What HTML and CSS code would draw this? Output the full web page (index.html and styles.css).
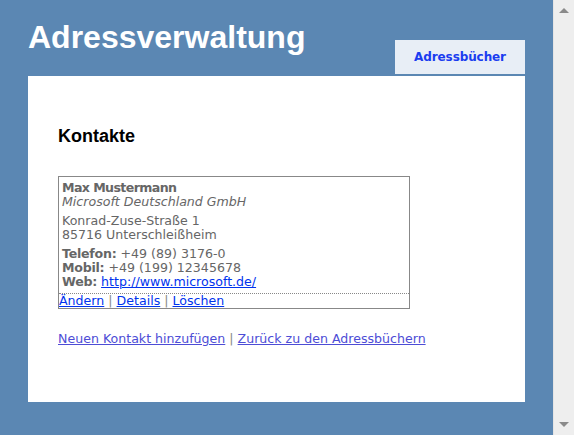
FILE: index.html
```html
<!DOCTYPE html>
<html lang="de">
<head>
<meta charset="utf-8">
<title>Adressverwaltung</title>
<link rel="stylesheet" href="styles.css">
</head>
<body>
<div class="window">
  <div class="page">
    <header class="header">
      <h1 class="title">Adressverwaltung</h1>
      <nav class="tab"><a href="#" class="tab-link">Adressbücher</a></nav>
    </header>
    <main class="panel">
      <h2 class="heading">Kontakte</h2>
      <div class="card">
        <div class="card-body">
          <div class="block">
            <div class="name">Max Mustermann</div>
            <div class="company">Microsoft Deutschland GmbH</div>
          </div>
          <div class="block">
            <div>Konrad-Zuse-Straße 1</div>
            <div>85716 Unterschleißheim</div>
          </div>
          <div class="block">
            <div><span class="label">Telefon:</span> +49 (89) 3176-0</div>
            <div><span class="label">Mobil:</span> +49 (199) 12345678</div>
            <div><span class="label">Web:</span> <a href="#" class="link">http://www.microsoft.de/</a></div>
          </div>
        </div>
        <div class="card-actions">
          <a href="#" class="link">Ändern</a> <span class="sep">|</span> <a href="#" class="link">Details</a> <span class="sep">|</span> <a href="#" class="link">Löschen</a>
        </div>
      </div>
      <div class="footer-links">
        <a href="#" class="visited">Neuen Kontakt hinzufügen</a> <span class="sep">|</span> <a href="#" class="visited">Zurück zu den Adressbüchern</a>
      </div>
    </main>
  </div>
  <div class="scrollbar">
    <span class="arrow arrow-up"></span>
    <span class="arrow arrow-down"></span>
  </div>
</div>
</body>
</html>
```

FILE: styles.css
```css
html, body {
  margin: 0;
  padding: 0;
  height: 100%;
}

body {
  background: #5b87b3;
  font-family: "DejaVu Sans", Verdana, sans-serif;
  font-size: 12.6px;
  color: #666;
  overflow: hidden;
}

.window {
  display: flex;
  height: 435px;
}

.page {
  flex: 1;
  padding: 0 28px;
}

.header {
  display: flex;
  justify-content: space-between;
  align-items: flex-start;
  height: 74px;
  margin-bottom: 2px;
}

.title {
  margin: 0;
  padding-top: 19px;
  font-family: "Liberation Sans", Arial, sans-serif;
  font-size: 32px;
  font-weight: bold;
  line-height: 37px;
  color: #fff;
}

.tab {
  align-self: flex-end;
  width: 130px;
  height: 34px;
  background: #e8eef6;
  display: flex;
  align-items: center;
  justify-content: center;
}

.tab-link {
  font-family: "DejaVu Sans", Tahoma, sans-serif;
  font-size: 12px;
  font-weight: bold;
  color: #1a3cf0;
  text-decoration: none;
  letter-spacing: -0.1px;
}

.panel {
  background: #fff;
  height: 326px;
  box-sizing: border-box;
  padding: 50px 30px 0;
}

.heading {
  margin: 0 0 30px;
  font-family: "Liberation Sans", Arial, sans-serif;
  font-size: 18px;
  font-weight: bold;
  line-height: 20px;
  color: #000;
}

.card {
  width: 350px;
  border: 1px solid #888;
}

.card-body {
  padding: 4px 3px 4px;
  line-height: 14px;
}

.block + .block {
  margin-top: 5px;
}

.name {
  font-weight: bold;
  letter-spacing: -0.6px;
}

.label {
  font-weight: bold;
  letter-spacing: -0.25px;
}

.company {
  font-style: italic;
}

.link {
  color: #0033ee;
}

.card-actions {
  border-top: 1px dotted #888;
  line-height: 14px;
}

.sep {
  color: #888;
}

.footer-links {
  margin-top: 23px;
  line-height: 14px;
}

.visited {
  color: #4d4dd6;
}

.scrollbar {
  flex: none;
  width: 21px;
  background: #eeeeee;
  border-left: 1px solid #e4e4e4;
  display: flex;
  flex-direction: column;
  justify-content: space-between;
  align-items: center;
  padding: 8px 0;
  box-sizing: border-box;
}

.arrow {
  width: 0;
  height: 0;
  border-left: 5px solid transparent;
  border-right: 5px solid transparent;
}

.arrow-up {
  border-bottom: 5px solid #8a8a8a;
}

.arrow-down {
  border-top: 5px solid #8a8a8a;
}
```
